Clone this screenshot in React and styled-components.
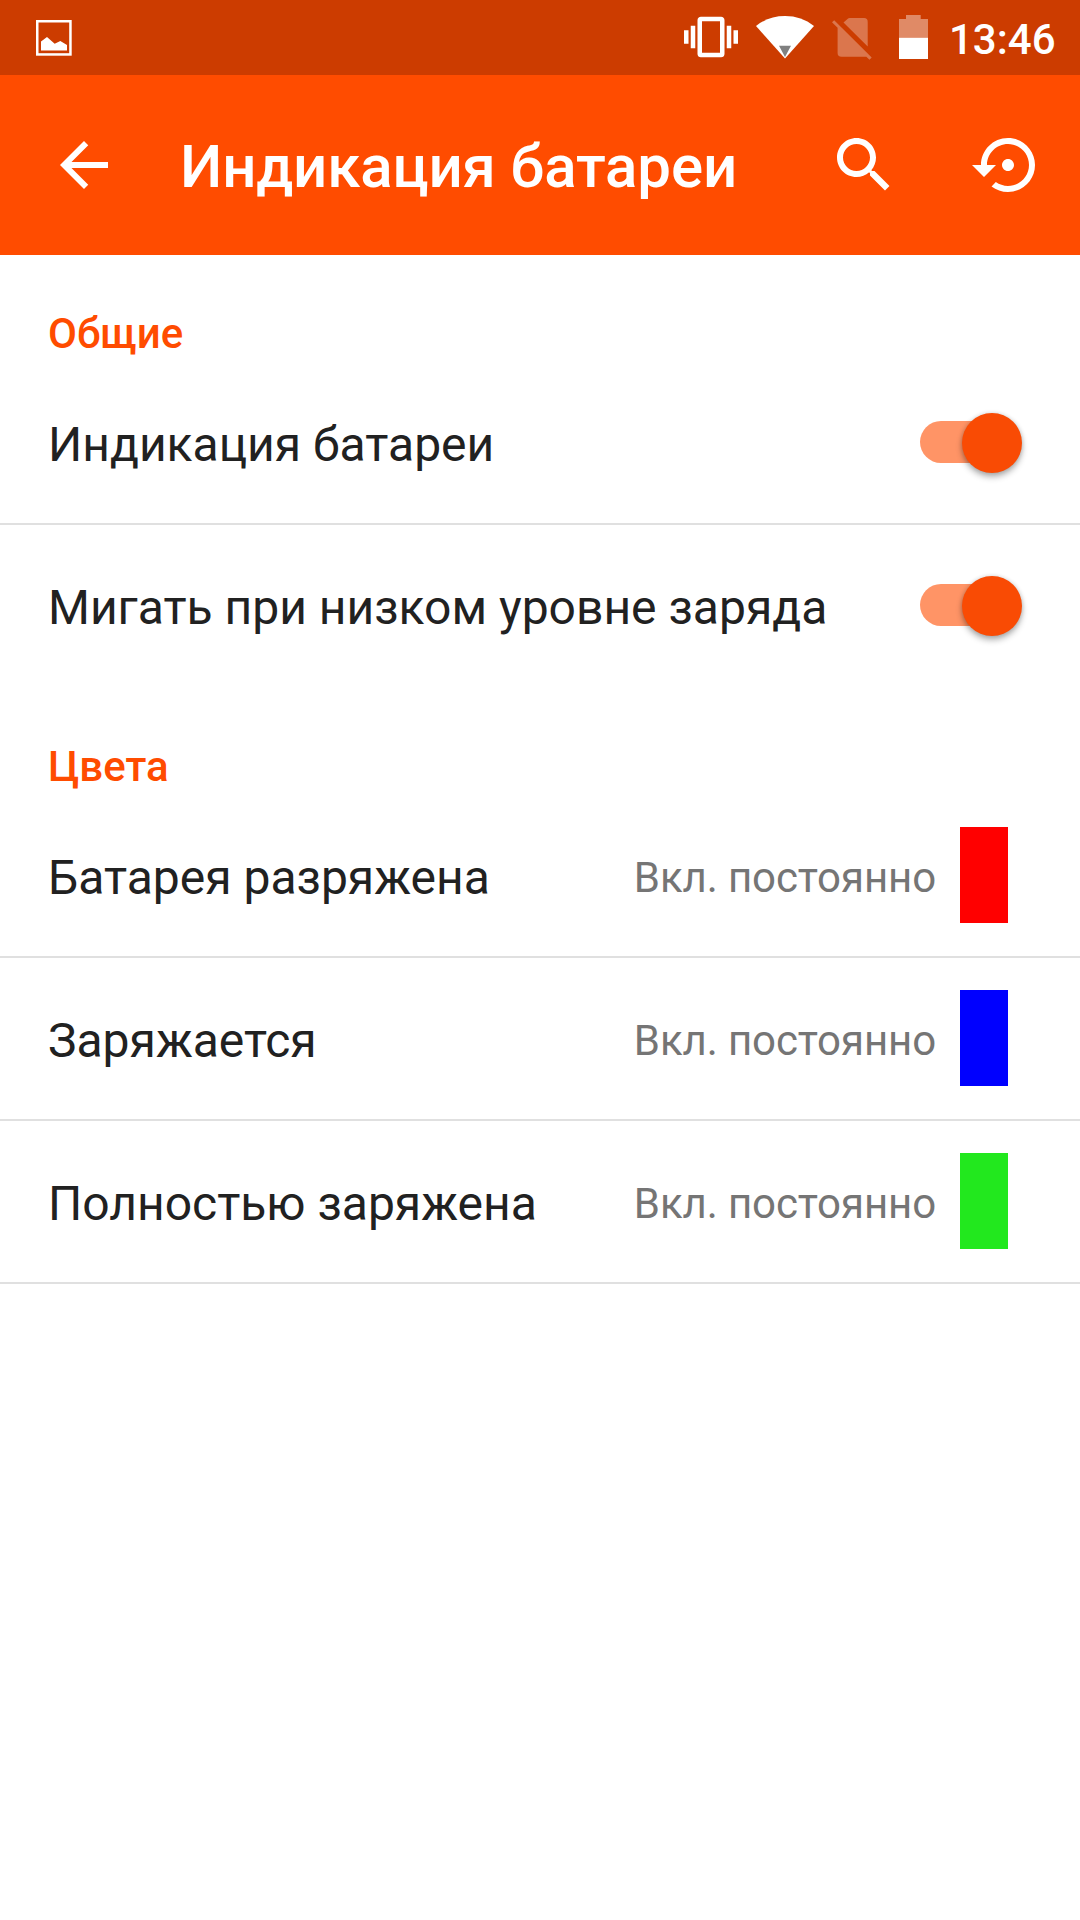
import React from 'react';
import styled, { createGlobalStyle } from 'styled-components';

const App = () => {
  return (
    <>
      <GlobalStyle />
      <Screen>
        <StatusBar>
          <PictureIcon />
          <StatusIcons>
            <VibrateIcon />
            <WifiIcon />
            <NoSimIcon />
            <BatteryIcon />
          </StatusIcons>
          <Clock>13:46</Clock>
        </StatusBar>
        <Toolbar>
          <IconButton aria-label="Назад">
            <Icon d="M20 11H7.83l5.59-5.59L12 4l-8 8 8 8 1.41-1.41L7.83 13H20v-2z" />
          </IconButton>
          <Title>Индикация батареи</Title>
          <Actions>
            <IconButton aria-label="Поиск">
              <Icon d="M15.5 14h-.79l-.28-.27C15.41 12.59 16 11.11 16 9.5 16 5.91 13.09 3 9.5 3S3 5.91 3 9.5 5.91 16 9.5 16c1.61 0 3.09-.59 4.23-1.57l.27.28v.79l5 4.99L20.49 19l-4.99-5zm-6 0C7.01 14 5 11.99 5 9.5S7.01 5 9.5 5 14 7.01 14 9.5 11.99 14 9.5 14z" />
            </IconButton>
            <IconButton aria-label="Сбросить">
              <Icon d="M14 12c0-1.1-.9-2-2-2s-2 .9-2 2 .9 2 2 2 2-.9 2-2zm-2-9c-4.97 0-9 4.03-9 9H0l4 4 4-4H5c0-3.87 3.13-7 7-7s7 3.13 7 7-3.13 7-7 7c-1.51 0-2.91-.49-4.06-1.3l-1.42 1.44C8.04 20.3 9.94 21 12 21c4.97 0 9-4.03 9-9s-4.03-9-9-9z" />
            </IconButton>
          </Actions>
        </Toolbar>

        <SectionTitle>Общие</SectionTitle>
        <SwitchRow label="Индикация батареи" />
        <SwitchRow label="Мигать при низком уровне заряда" last />

        <SectionTitle>Цвета</SectionTitle>
        {lights.map(({ label, color }) => (
          <Row key={label}>
            <Label>{label}</Label>
            <Value>Вкл. постоянно</Value>
            <Swatch $color={color} />
          </Row>
        ))}
      </Screen>
    </>
  );
}

const lights = [
  { label: 'Батарея разряжена', color: '#ff0000' },
  { label: 'Заряжается', color: '#0000ff' },
  { label: 'Полностью заряжена', color: '#22e81e' },
];

const SwitchRow = ({ label, last }) => (
  <Row $last={last}>
    <Label>{label}</Label>
    <Switch role="switch" aria-checked="true">
      <Thumb />
    </Switch>
  </Row>
);

const Icon = ({ d }) => (
  <svg width="72" height="72" viewBox="0 0 24 24" fill="#fff">
    <path d={d} />
  </svg>
);

const PictureIcon = () => (
  <svg width="36" height="36" viewBox="0 0 36 36">
    <rect x="1.25" y="1.25" width="33.2" height="33.2" fill="none" stroke="#fff" strokeWidth="2.5" />
    <path d="M5 21.5L11 17l7.7 6.7 5.6-2.7L31 25v5.6H5z" fill="#fff" />
  </svg>
);

const VibrateIcon = () => (
  <svg width="54" height="54" viewBox="0 0 24 24" fill="#fff">
    <path d="M0 15h2V9H0v6zm3 2h2V7H3v10zm19-8v6h2V9h-2zm-3 8h2V7h-2v10zM16.5 3h-9C6.67 3 6 3.67 6 4.5v15c0 .83.67 1.5 1.5 1.5h9c.83 0 1.5-.67 1.5-1.5v-15c0-.83-.67-1.5-1.5-1.5zM16 19H8V5h8v14z" />
  </svg>
);

const WifiIcon = () => (
  <svg width="58" height="54" viewBox="0 0 58 54">
    <path d="M29 48.4L0 16C8.500 9.300 18 6 29 6s20.500 3.300 29 10z" fill="#fff" />
    <path d="M23 35.800h12L29 47z" fill="#808080" />
  </svg>
);

const NoSimIcon = () => (
  <svg width="40" height="54" viewBox="0 0 40 54" fill="#fff" fillOpacity="0.3">
    <path d="M11.500 12.500L15.800 8.800Q16.500 8 17.700 8H32q3.700 0 3.700 3.700V36.500z" />
    <path d="M0 12.300l2.200-2.100L39.700 47.500l-2.200 2.300-3.200-3.100H9.500q-3.900 0-3.900-3.800V17.800z" />
  </svg>
);

const BatteryIcon = () => (
  <svg width="29" height="54" viewBox="0 0 29 54" fill="#fff">
    <path d="M7 5h14.700v4H29v18.700H0V9h7z" fillOpacity="0.4" />
    <path d="M0 27.700h29V49H0z" />
  </svg>
);

const GlobalStyle = createGlobalStyle`
  body {
    margin: 0;
    background: #fff;
  }
`;

const Screen = styled.div`
  width: 1080px;
  min-height: 1920px;
  background: #fff;
  color: #212121;
  font-family: Roboto, sans-serif;
`;

const StatusBar = styled.div`
  display: flex;
  align-items: center;
  height: 75px;
  padding: 0 25px 0 36px;
  box-sizing: border-box;
  background: #cc3c00;

  svg {
    display: block;
  }
`;

const StatusIcons = styled.div`
  display: flex;
  gap: 18px;
  margin: 0 0 1px auto;

  svg:last-child {
    margin-left: 9px;
  }
`;

const Clock = styled.span`
  margin-left: 21px;
  width: 106px;
  padding-top: 5px;
  box-sizing: border-box;
  color: #fff;
  font-size: 42px;
  font-weight: 500;
  line-height: 48px;
`;

const Toolbar = styled.header`
  display: flex;
  align-items: center;
  height: 180px;
  padding: 0 36px 0 48px;
  box-sizing: border-box;
  background: #ff4c00;
`;

const IconButton = styled.button`
  display: flex;
  padding: 0;
  border: 0;
  background: none;
`;

const Title = styled.h1`
  margin: 4px 0 0 60px;
  color: #fff;
  font-size: 60px;
  font-weight: 500;
  line-height: 70px;
  letter-spacing: -0.13px;
`;

const Actions = styled.div`
  display: flex;
  gap: 72px;
  margin-left: auto;
`;

const SectionTitle = styled.h2`
  height: 107px;
  margin: 0;
  padding: 54px 48px 0;
  box-sizing: border-box;
  color: #ff4c00;
  font-size: 42px;
  font-weight: 500;
  line-height: 49px;
`;

const Row = styled.div`
  display: flex;
  align-items: center;
  height: 163px;
  padding: 0 72px 0 48px;
  box-sizing: border-box;
  border-bottom: 2px solid ${({ $last }) => ($last ? 'transparent' : '#e0e0e0')};
`;

const Label = styled.span`
  flex: 1;
  padding-top: 4px;
  font-size: 48px;
  line-height: 56px;
`;

const Value = styled.span`
  padding-top: 4px;
  margin-right: 24px;
  color: #757575;
  font-size: 42px;
  line-height: 49px;
  letter-spacing: -0.1px;
`;

const Swatch = styled.div`
  width: 48px;
  height: 96px;
  margin-bottom: 1px;
  background: ${({ $color }) => $color};
`;

const Switch = styled.div`
  display: flex;
  align-items: center;
  justify-content: flex-end;
  width: 94px;
  height: 42px;
  margin: 0 -6px 1px 0;
  border-radius: 21px;
  background: #ff9466;
`;

const Thumb = styled.div`
  flex: none;
  width: 60px;
  height: 60px;
  margin: 1px -7.5px 0 0;
  border-radius: 50%;
  background: #f94b04;
  box-shadow: 0 4px 6px rgba(0, 0, 0, 0.3), 0 0 4px rgba(0, 0, 0, 0.15);
`;

export default App;
